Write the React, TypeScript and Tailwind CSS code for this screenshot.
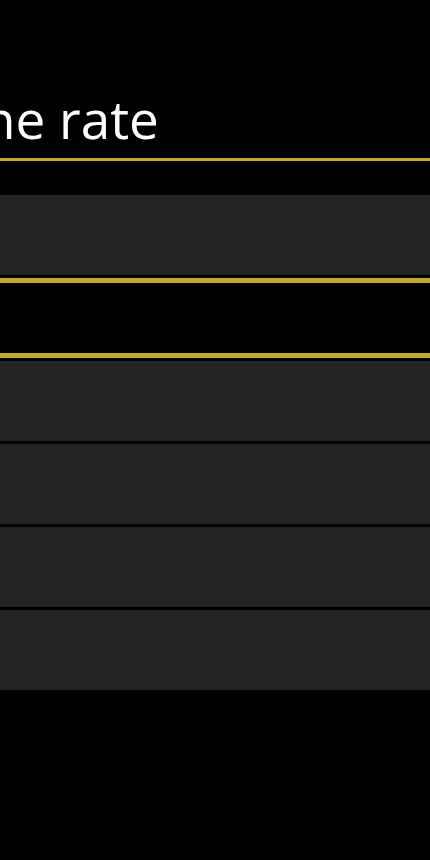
export default function App() {
  const rows = [0, 1, 2, 3];

  return (
    <div className="w-[430px] h-[860px] bg-black overflow-hidden" style={{ fontFamily: '"Open Sans", "Noto Sans", sans-serif' }}>
      {/* title, scrolled off the left edge */}
      <div className="h-[158px] overflow-hidden flex items-end pb-[8px]">
        <span className="-ml-[17px] whitespace-nowrap text-[53px] leading-[62px] text-white">ne rate</span>
      </div>
      <div className="h-[3px] bg-[#c8aa22]" />

      <div className="h-[34px]" />
      <div className="h-[80px] bg-[#232323]" />

      <div className="h-[3px]" />
      <div className="h-[5px] bg-[#c8aa22]" />
      <div className="h-[70px]" />
      <div className="h-[5px] bg-[#c8aa22]" />
      <div className="h-[3px]" />

      <div className="flex flex-col gap-[3px]">
        {rows.map((r) => (
          <div key={r} className="h-[80px] bg-[#232323]" />
        ))}
      </div>
    </div>
  );
}
